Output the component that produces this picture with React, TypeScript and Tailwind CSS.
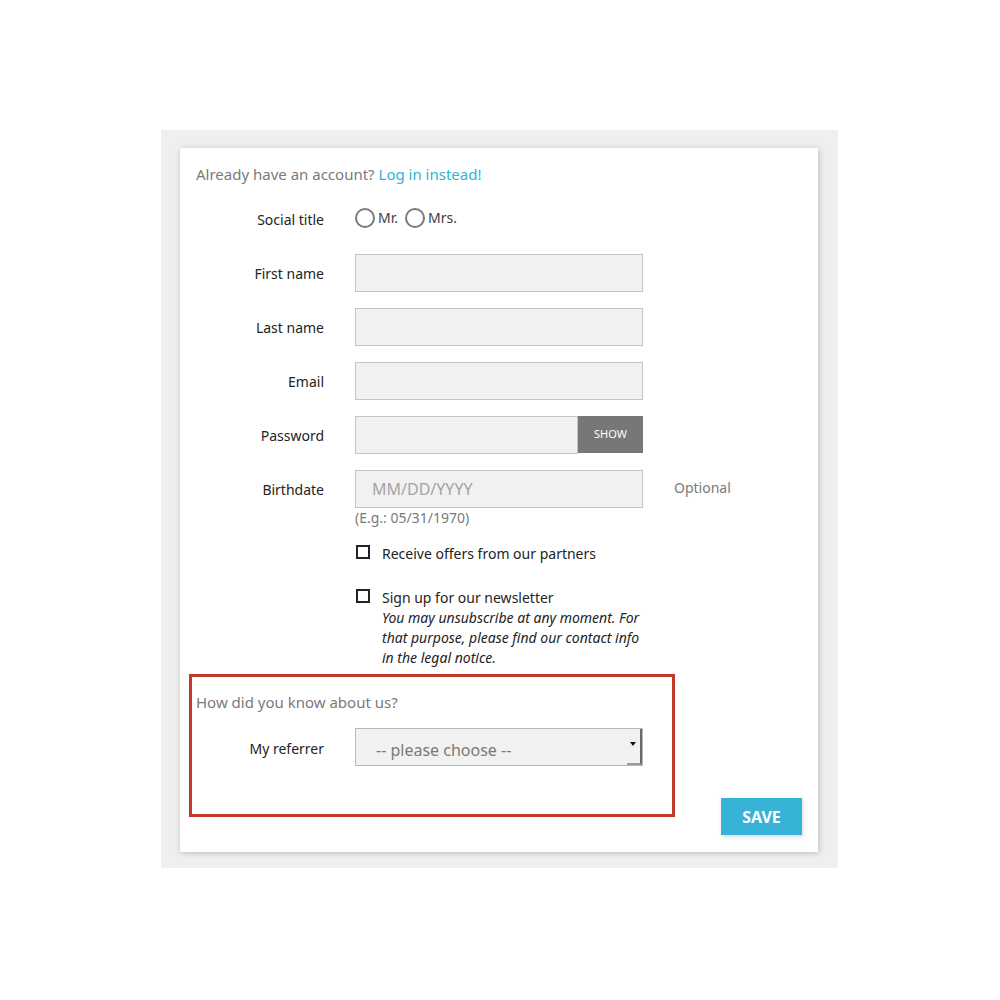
import React from "react";

const font = { fontFamily: '"Noto Sans", "Open Sans", sans-serif' };

function Row({ label, children, extra }: { label: string; children: React.ReactNode; extra?: React.ReactNode }) {
  return (
    <div className="flex items-center h-[38px]">
      <div className="w-[128px] text-right text-[14px] text-[#232323]">{label}</div>
      <div className="ml-[31px] w-[288px] h-full flex">{children}</div>
      {extra}
    </div>
  );
}

function Input({ placeholder }: { placeholder?: string }) {
  return (
    <div className="flex-1 h-full bg-[#f1f1f1] border border-[#c4c4c4] flex items-center pl-[16px] text-[16px] text-[#a4a4a4]">
      {placeholder}
    </div>
  );
}

function Radio({ label }: { label: string }) {
  return (
    <div className="flex items-center">
      <span className="w-[20px] h-[20px] rounded-full border-2 border-[#7a7a7a] bg-white" />
      <span className="ml-[3px] text-[14px] text-[#414141] -mt-[2px]">{label}</span>
    </div>
  );
}

export default function App() {
  return (
    <div className="w-full h-[1000px] bg-white pt-[130px]" style={font}>
      <div className="ml-[161px] w-[677px] bg-[#efefef] pl-[19px] pr-[20px] pt-[18px] pb-[16px]">
        <div className="bg-white shadow-[1px_1px_6px_rgba(0,0,0,0.22)] px-[16px] pt-[15px] pb-[17px]">
          <div className="text-[15px] leading-[22px] text-[#7a7a7a]">
            Already have an account? <span className="text-[#2fb5d2]">Log in instead!</span>
          </div>

          <div className="mt-[15px] flex flex-col gap-[16px]">
            <div className="flex items-center h-[38px]">
              <div className="w-[128px] text-right text-[14px] text-[#232323]">Social title</div>
              <div className="ml-[31px] flex items-center gap-[7px] -mt-[2px]">
                <Radio label="Mr." />
                <Radio label="Mrs." />
              </div>
            </div>
            <Row label="First name"><Input /></Row>
            <Row label="Last name"><Input /></Row>
            <Row label="Email"><Input /></Row>
            <Row label="Password">
              <Input />
              <div className="w-[65px] h-[37px] bg-[#777777] flex items-center justify-center text-[11px] text-white">SHOW</div>
            </Row>
            <Row
              label="Birthdate"
              extra={<div className="ml-[31px] text-[14px] text-[#7a7a7a] -mt-[4px]">Optional</div>}
            >
              <Input placeholder="MM/DD/YYYY" />
            </Row>
          </div>

          <div className="ml-[159px] text-[14px] leading-[20px] text-[#7a7a7a]">(E.g.: 05/31/1970)</div>

          <div className="ml-[160px] mt-[16px] flex items-start">
            <span className="mt-[1px] w-[14px] h-[14px] border-2 border-[#232323]" />
            <span className="ml-[12px] text-[14px] leading-[20px] text-[#232323]">Receive offers from our partners</span>
          </div>

          <div className="ml-[160px] mt-[24px] flex items-start">
            <span className="mt-[1px] w-[14px] h-[14px] shrink-0 border-2 border-[#232323]" />
            <div className="ml-[12px] w-[270px] text-[14px] leading-[20px] text-[#232323]">
              <div>Sign up for our newsletter</div>
              <div className="italic">You may unsubscribe at any moment. For that purpose, please find our contact info in the legal notice.</div>
            </div>
          </div>

          <div className="relative mt-[23px]">
            <div className="absolute -left-[7px] -top-[17px] w-[486px] h-[143px] border-[3px] border-[#c23b2a] pointer-events-none" />
            <div className="text-[15px] leading-[22px] text-[#7a7a7a]">How did you know about us?</div>
            <div className="mt-[15px] flex items-center h-[38px]">
              <div className="w-[128px] text-right text-[14px] text-[#232323] mt-[3px]">My referrer</div>
              <div className="ml-[31px] w-[288px] h-full relative bg-[#f1f1f1] border border-[#b8b8b8] flex items-center pl-[20px] text-[16px] text-[#7a7a7a]">
                <span className="mt-[6px]">-- please choose --</span>
                <div className="absolute right-0 top-0 h-full w-[15px] border-r-2 border-b-2 border-[#6a6a6a] border-b-[#9a9a9a]">
                  <span className="absolute left-[3px] top-[13px] w-0 h-0 border-l-[3px] border-r-[3px] border-t-[4px] border-l-transparent border-r-transparent border-t-[#111]" />
                </div>
              </div>
            </div>
          </div>

          <div className="flex justify-end mt-[32px]">
            <div className="w-[81px] h-[37px] bg-[#36b3d6] shadow-[1px_2px_4px_rgba(0,0,0,0.15)] flex items-center justify-center text-[16px] font-bold text-white">
              SAVE
            </div>
          </div>
        </div>
      </div>
    </div>
  );
}
